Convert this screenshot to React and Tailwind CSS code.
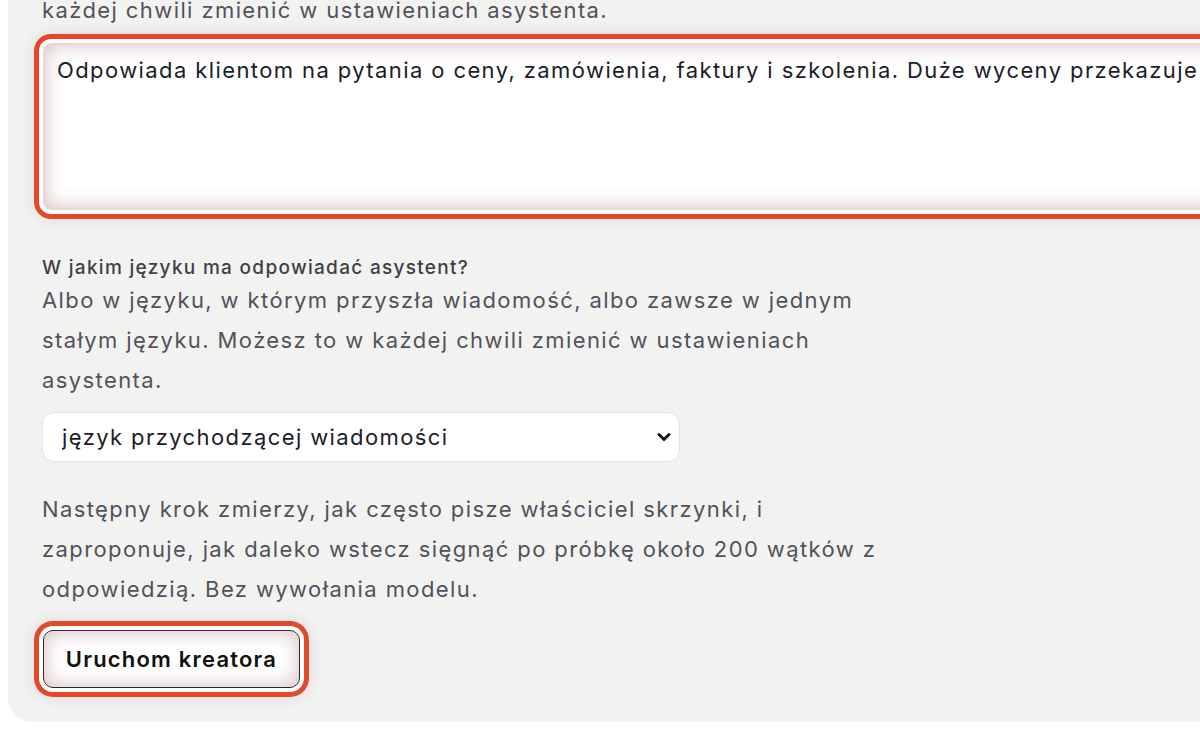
import React, { useState } from 'react';
import { ChevronDown } from 'lucide-react';

const ringFocus =
  'shadow-[inset_0_0_18px_2px_rgba(140,70,70,0.32),0_0_0_4px_#ffffff,0_0_0_9px_#e2492b,0_0_16px_9px_rgba(0,0,0,0.10)]';

const App = () => {
  const [description, setDescription] = useState(
    'Odpowiada klientom na pytania o ceny, zamówienia, faktury i szkolenia. Duże wyceny przekazuje dalej.'
  );
  const [language, setLanguage] = useState('incoming');

  return (
    <div className="h-[750px] w-[1200px] overflow-hidden bg-white font-['Inter',sans-serif]">
      {/* Settings card */}
      <section className="-mt-[10px] ml-[8px] w-[1700px] rounded-b-[24px] bg-[#f2f2f0] pl-[34px] pb-[34px]">
        <p className="text-[22px] leading-[40px] tracking-[1.4px] text-[#52525b]">
          każdej chwili zmienić w ustawieniach asystenta.
        </p>

        <div className="mt-[13px] ml-px">
          <textarea
            className={`block h-[167px] w-[1600px] resize-none rounded-[8px] border border-[#e2d4d4] bg-white px-[13px] pt-[10px] text-[22px] leading-[33px] tracking-[1.4px] text-[#1c1c28] outline-none ${ringFocus}`}
            value={description}
            onChange={(e) => setDescription(e.target.value)}
          />
        </div>

        <label
          htmlFor="lang"
          className="mt-[46px] block text-[19px] font-medium leading-[24px] tracking-[1.3px] text-[#3f3f46]"
        >
          W jakim języku ma odpowiadać asystent?
        </label>
        <p className="max-w-[858px] text-[22px] leading-[40px] tracking-[1.4px] text-[#52525b]">
          Albo w języku, w którym przyszła wiadomość, albo zawsze w jednym stałym języku. Możesz to w
          każdej chwili zmienić w ustawieniach asystenta.
        </p>

        <div className="relative mt-[12px] w-[638px]">
          <select
            id="lang"
            className="block h-[50px] w-full appearance-none rounded-[12px] border border-[#e4e4e2] bg-white pl-[19px] text-[22px] tracking-[1.4px] text-[#1c1c28] outline-none"
            value={language}
            onChange={(e) => setLanguage(e.target.value)}
          >
            <option value="incoming">język przychodzącej wiadomości</option>
            <option value="fixed">zawsze jeden stały język</option>
          </select>
          <ChevronDown
            className="pointer-events-none absolute right-[6px] top-[15px] h-[20px] w-[20px] text-[#111]"
            strokeWidth={3.5}
          />
        </div>

        <p className="mt-[27px] max-w-[858px] text-[22px] leading-[40px] tracking-[1.4px] text-[#52525b]">
          Następny krok zmierzy, jak często pisze właściciel skrzynki, i zaproponuje, jak daleko wstecz
          sięgnąć po próbkę około 200 wątków z odpowiedzią. Bez wywołania modelu.
        </p>

        <button
          type="button"
          className={`mt-[21px] ml-px h-[58px] w-[257px] rounded-[10px] border border-[#2a2a2a] bg-white text-[22px] font-semibold tracking-[1.2px] text-[#111] ${ringFocus}`}
        >
          Uruchom kreatora
        </button>
      </section>
    </div>
  );
};

export default App;
